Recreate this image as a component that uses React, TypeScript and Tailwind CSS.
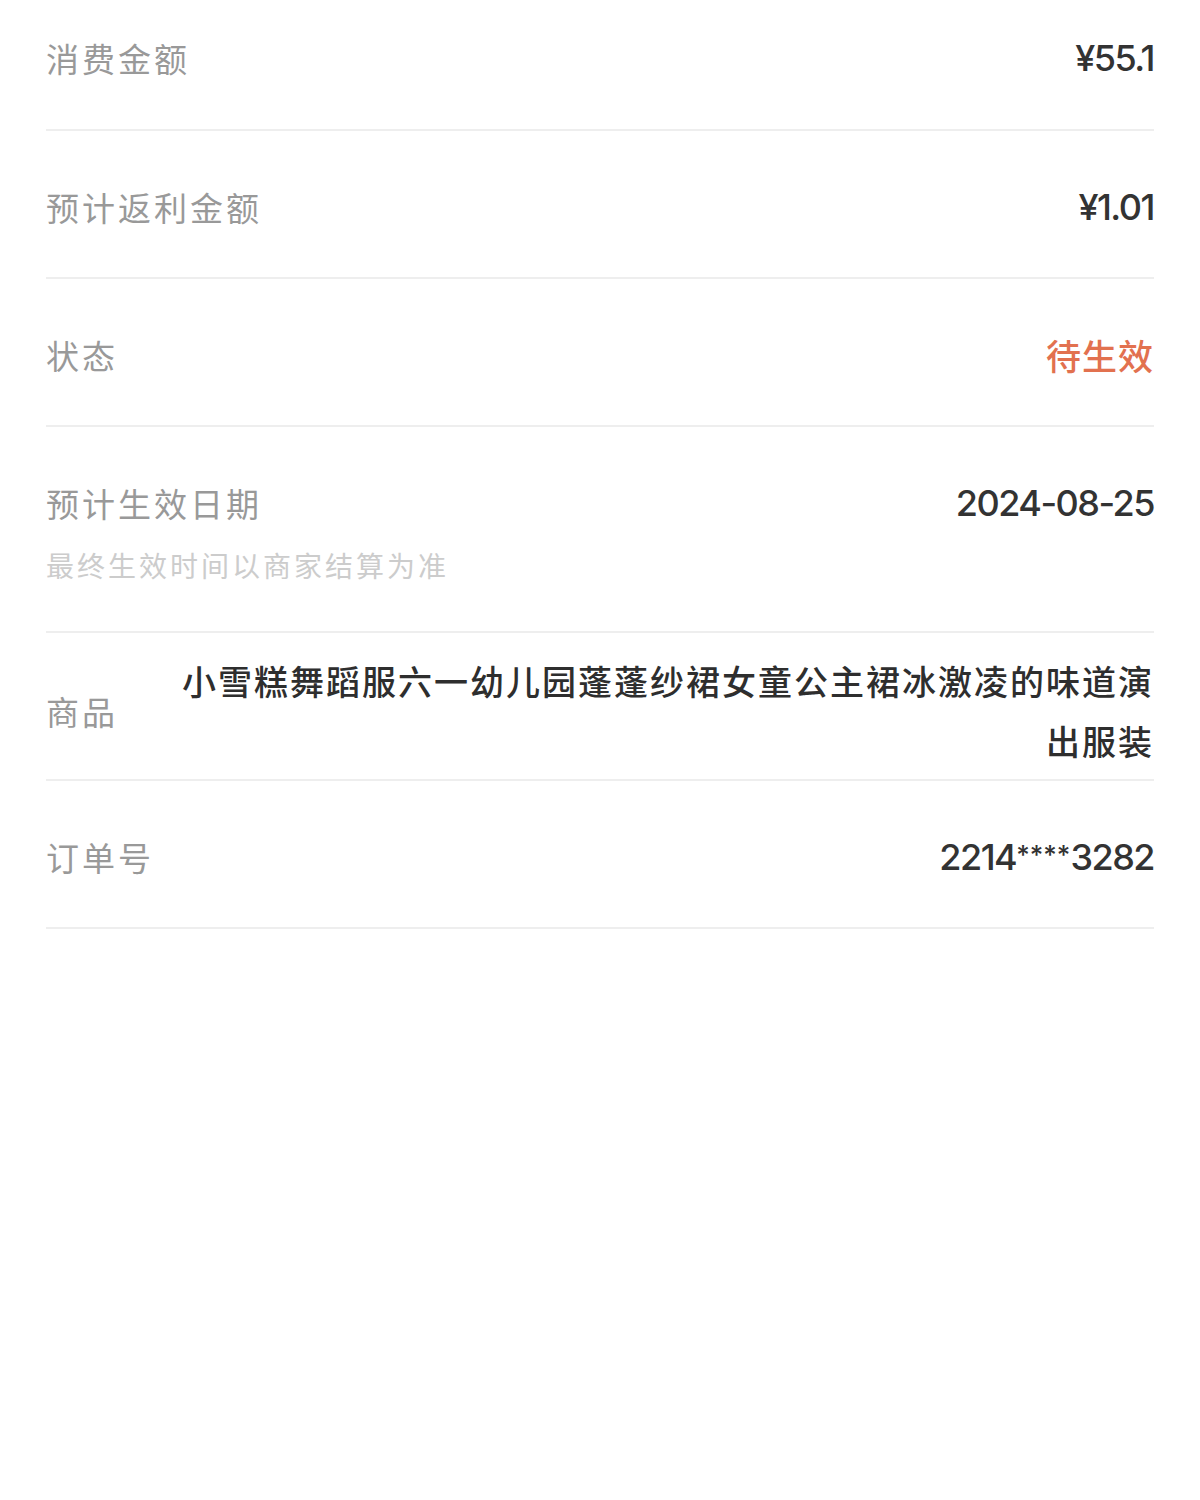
const cjk = "font-['Noto_Sans_CJK_SC',sans-serif]";
const num = "font-['Inter','Noto_Sans_CJK_SC',sans-serif]";
const amount = `${num} text-[36px] font-medium leading-[48px] tracking-[-1.5px] text-[#333333]`;

function Row({ label, children, className = "" }: { label: React.ReactNode; children: React.ReactNode; className?: string }) {
  return (
    <div className={`flex justify-between border-b-2 border-[#eeeeee] ${className}`}>
      {label}
      {children}
    </div>
  );
}

function Label({ text }: { text: string }) {
  return <span className={`${cjk} shrink-0 text-[33px] leading-[48px] tracking-[3px] text-[#999999]`}>{text}</span>;
}

export default function App() {
  return (
    <div className="min-h-[1500px] w-[1200px] bg-white px-[46px]">
      <Row label={<Label text="消费金额" />} className="h-[131px] items-start pt-[34px]">
        <span className={amount}>¥55.1</span>
      </Row>

      <Row label={<Label text="预计返利金额" />} className="h-[148px] items-start pt-[52px]">
        <span className={amount}>¥1.01</span>
      </Row>

      <Row label={<Label text="状态" />} className="h-[148px] items-start pt-[52px]">
        <span className={`${cjk} text-[35px] font-medium leading-[48px] tracking-[1px] text-[#e2714f]`}>待生效</span>
      </Row>

      <Row
        label={
          <div className="flex flex-col">
            <Label text="预计生效日期" />
            <span className={`${cjk} mt-[18px] text-[28px] leading-[40px] tracking-[3px] text-[#cccccc]`}>最终生效时间以商家结算为准</span>
          </div>
        }
        className="h-[206px] items-start pt-[52px]"
      >
        <span className={amount}>2024-08-25</span>
      </Row>

      <Row label={<Label text="商品" />} className="h-[148px] items-center gap-[50px] pb-[6px] pt-[16px]">
        <span className={`${cjk} flex-1 text-right text-[34px] font-medium leading-[60px] tracking-[2px] text-[#2e2e2e]`}>
          小雪糕舞蹈服六一幼儿园蓬蓬纱裙女童公主裙冰激凌的味道演出服装
        </span>
      </Row>

      <Row label={<Label text="订单号" />} className="h-[148px] items-start pt-[52px]">
        <span className={amount}>
          2214<span className="relative top-[-6px] text-[26px] tracking-[0px]">****</span>3282
        </span>
      </Row>
    </div>
  );
}
